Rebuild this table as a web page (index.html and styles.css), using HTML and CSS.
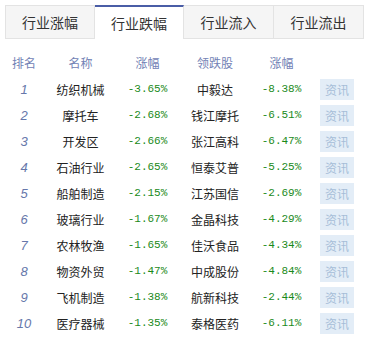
FILE: index.html
```html
<!DOCTYPE html>
<html lang="zh">
<head>
<meta charset="utf-8">
<link rel="stylesheet" href="styles.css">
</head>
<body>
<div class="wrap">
  <div class="tabs">
    <div class="tab">行业涨幅</div>
    <div class="tab active">行业跌幅</div>
    <div class="tab">行业流入</div>
    <div class="tab">行业流出</div>
  </div>
  <div class="table">
    <div class="row head">
      <span>排名</span><span>名称</span><span>涨幅</span><span>领跌股</span><span>涨幅</span><span></span>
    </div>
    <div class="row"><span class="rank">1</span><span class="name">纺织机械</span><span class="pct">-3.65%</span><span class="name">中毅达</span><span class="pct">-8.38%</span><span class="btncell"><span class="btn">资讯</span></span></div>
    <div class="row"><span class="rank">2</span><span class="name">摩托车</span><span class="pct">-2.68%</span><span class="name">钱江摩托</span><span class="pct">-6.51%</span><span class="btncell"><span class="btn">资讯</span></span></div>
    <div class="row"><span class="rank">3</span><span class="name">开发区</span><span class="pct">-2.66%</span><span class="name">张江高科</span><span class="pct">-6.47%</span><span class="btncell"><span class="btn">资讯</span></span></div>
    <div class="row"><span class="rank">4</span><span class="name">石油行业</span><span class="pct">-2.65%</span><span class="name">恒泰艾普</span><span class="pct">-5.25%</span><span class="btncell"><span class="btn">资讯</span></span></div>
    <div class="row"><span class="rank">5</span><span class="name">船舶制造</span><span class="pct">-2.15%</span><span class="name">江苏国信</span><span class="pct">-2.69%</span><span class="btncell"><span class="btn">资讯</span></span></div>
    <div class="row"><span class="rank">6</span><span class="name">玻璃行业</span><span class="pct">-1.67%</span><span class="name">金晶科技</span><span class="pct">-4.29%</span><span class="btncell"><span class="btn">资讯</span></span></div>
    <div class="row"><span class="rank">7</span><span class="name">农林牧渔</span><span class="pct">-1.65%</span><span class="name">佳沃食品</span><span class="pct">-4.34%</span><span class="btncell"><span class="btn">资讯</span></span></div>
    <div class="row"><span class="rank">8</span><span class="name">物资外贸</span><span class="pct">-1.47%</span><span class="name">中成股份</span><span class="pct">-4.84%</span><span class="btncell"><span class="btn">资讯</span></span></div>
    <div class="row"><span class="rank">9</span><span class="name">飞机制造</span><span class="pct">-1.38%</span><span class="name">航新科技</span><span class="pct">-2.44%</span><span class="btncell"><span class="btn">资讯</span></span></div>
    <div class="row"><span class="rank">10</span><span class="name">医疗器械</span><span class="pct">-1.35%</span><span class="name">泰格医药</span><span class="pct">-6.11%</span><span class="btncell"><span class="btn">资讯</span></span></div>
  </div>
</div>
</body>
</html>
```
FILE: styles.css
```css
* { box-sizing: border-box; }
body {
  margin: 0;
  background: #fff;
  font-family: "Noto Sans CJK SC", "Liberation Sans", sans-serif;
  color: #333;
}
.wrap { padding: 5px 0 0 5px; }
.tabs {
  display: flex;
  height: 34px;
}
.tab {
  width: 90px;
  height: 34px;
  background: #f5f5f5;
  border: 1px solid #e3e3e3;
  border-left: none;
  font-size: 14px;
  color: #333;
  display: flex;
  align-items: center;
  justify-content: center;
}
.tab:first-child { border-left: 1px solid #e3e3e3; }
.tab.active {
  background: #fff;
  border-top: 2px solid #4a5da6;
  border-bottom: none;
  width: 89px;
}
.table { margin-top: 10px; margin-left: -5px; }
.row {
  display: grid;
  grid-template-columns: 48px 65px 69px 66px 67px 1fr;
  height: 26px;
  align-items: center;
  font-size: 12px;
}
.row > span { text-align: center; white-space: nowrap; }
.row.head { height: 27px; color: #7282b5; }
.rank { color: #6677aa; font-style: italic; font-family: "Liberation Sans", sans-serif; font-size: 13px; }
.name { color: #222; font-size: 12px; }
.pct { color: #1a8a1a; font-family: "Liberation Mono", monospace; font-size: 11px; }
.btncell { display: flex; justify-content: flex-start; padding-left: 5px; }
.btn {
  display: inline-flex;
  align-items: center;
  justify-content: center;
  width: 34px;
  height: 21px;
  background: #e3edf7;
  color: #a6bdd8;
  font-size: 12px;
}
```
